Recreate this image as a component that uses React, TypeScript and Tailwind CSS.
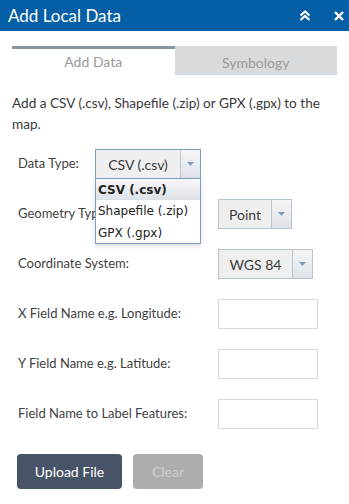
import React from "react";

const font = { fontFamily: "Lato, 'Open Sans', sans-serif" };

function Arrow() {
  return (
    <div className="flex h-full w-[20px] items-center justify-center border-l border-[#b9c3cf] bg-gradient-to-b from-[#f4f5f7] to-[#dfe3e8]">
      <svg width="7" height="4" viewBox="0 0 7 4">
        <polygon points="0,0 7,0 3.5,4" fill="#7d9bbd" />
      </svg>
    </div>
  );
}

function Select({ value, width, focused }: { value: string; width: string; focused?: boolean }) {
  return (
    <div
      className={`flex h-[30px] ${width} items-stretch border ${focused ? "border-[#7f9dc0]" : "border-[#b9c3cf]"} bg-[#efefef]`}
    >
      <div className="flex flex-1 items-center justify-center text-[14px] text-[#3a3a3a]">{value}</div>
      <Arrow />
    </div>
  );
}

function Row({ label, children }: { label: string; children: React.ReactNode }) {
  return (
    <div className="flex h-[30px] items-center">
      <div className="w-[200px] text-[13px] text-[#3f3f3f]">{label}</div>
      {children}
    </div>
  );
}

function Input() {
  return <div className="h-[30px] w-[100px] border border-[#d9d9d9] bg-white" />;
}

export default function App() {
  return (
    <div className="relative h-[504px] w-[349px] overflow-hidden bg-white" style={font}>
      <div className="flex h-[31px] items-center justify-between bg-[#055fa6] pl-[8px] pr-[5px]">
        <div className="text-[17px] text-white">Add Local Data</div>
        <div className="flex items-center gap-[23px]">
          <svg width="12" height="11" viewBox="0 0 12 11" fill="none" stroke="white" strokeWidth="2.2">
            <polyline points="1.5,5.5 6,1.5 10.5,5.5" />
            <polyline points="1.5,10 6,6 10.5,10" />
          </svg>
          <svg width="10" height="10" viewBox="0 0 10 10" stroke="white" strokeWidth="2.4">
            <line x1="1" y1="1" x2="9" y2="9" />
            <line x1="9" y1="1" x2="1" y2="9" />
          </svg>
        </div>
      </div>

      <div className="mx-[12px] mt-[15px] flex h-[29px]">
        <div className="flex flex-1 items-center justify-center border-t-[3px] border-[#8b959d] pb-[1px] text-[14px] text-[#999]">
          Add Data
        </div>
        <div className="flex flex-1 items-center justify-center bg-[#d8dbde] pt-[3px] text-[14px] text-[#999]">
          Symbology
        </div>
      </div>

      <p className="mt-[18px] px-[12px] text-[13.6px] leading-[21px] text-[#3a3a3a]">
        Add a CSV (.csv), Shapefile (.zip) or GPX (.gpx) to the map.
      </p>

      <div className="mt-[14px] flex flex-col gap-[20px] pl-[18px]">
        <div className="flex h-[30px] items-center">
          <div className="w-[77px] text-[13px] text-[#3f3f3f]">Data Type:</div>
          <Select value="CSV (.csv)" width="w-[106px]" focused />
        </div>
        <Row label="Geometry Type:">
          <Select value="Point" width="w-[74px]" />
        </Row>
        <Row label="Coordinate System:">
          <Select value="WGS 84" width="w-[95px]" />
        </Row>
        <Row label="X Field Name e.g. Longitude:">
          <Input />
        </Row>
        <Row label="Y Field Name e.g. Latitude:">
          <Input />
        </Row>
        <Row label="Field Name to Label Features:">
          <Input />
        </Row>
      </div>

      <div className="mt-[25px] flex gap-[11px] pl-[17px]">
        <div className="flex h-[35px] w-[105px] items-center justify-center rounded-[4px] bg-[#475467] text-[14px] text-white">
          Upload File
        </div>
        <div className="flex h-[35px] w-[70px] items-center justify-center rounded-[4px] bg-[#adadad] text-[14px] text-[#cfcfcf]">
          Clear
        </div>
      </div>

      <div
        className="absolute left-[95px] top-[178px] w-[106px] border border-[#7f9dc0] bg-white shadow-[0_2px_4px_rgba(0,0,0,0.15)]"
        style={{ fontFamily: "'DejaVu Sans', Verdana, sans-serif" }}
      >
        <div className="flex h-[21px] items-center bg-gradient-to-b from-[#f6f7f9] to-[#dde1e6] pl-[2px] text-[12px] font-bold text-[#222]">
          CSV (.csv)
        </div>
        <div className="flex h-[22px] items-center pl-[2px] text-[12px] text-[#222]">Shapefile (.zip)</div>
        <div className="flex h-[21px] items-center pl-[2px] text-[12px] text-[#222]">GPX (.gpx)</div>
      </div>
    </div>
  );
}
